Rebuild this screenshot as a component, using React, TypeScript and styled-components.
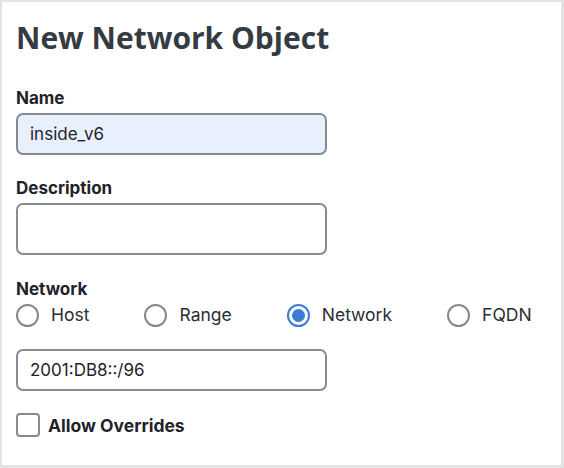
import { useState } from "react";
import styled, { createGlobalStyle } from "styled-components";

const GlobalStyle = createGlobalStyle`
  html, body {
    margin: 0;
    padding: 0;
    background: #ffffff;
  }
  body {
    font-family: Inter, "Liberation Sans", sans-serif;
    color: #1f2329;
  }
  * {
    box-sizing: border-box;
  }
`;

const Frame = styled.div`
  width: 564px;
  height: 468px;
  background: #ffffff;
  border-style: solid;
  border-color: #e3e3e3;
  border-width: 2px 3px 3px 2px;
  padding: 18px 14px 0 14px;
`;

const Title = styled.h1`
  margin: 0 0 32px;
  font-family: "Open Sans", Lato, sans-serif;
  font-weight: 700;
  font-size: 30px;
  line-height: 36px;
  color: #343b43;
  letter-spacing: 0;
`;

const Field = styled.div<{ gap?: number }>`
  display: flex;
  flex-direction: column;
  margin-bottom: ${(props) => props.gap ?? 21}px;
`;

const Label = styled.label`
  font-size: 17px;
  font-weight: 700;
  line-height: 20px;
  margin-bottom: 5px;
  color: #1f2329;
`;

const TextInput = styled.input<{ autofilled?: boolean; tall?: boolean }>`
  width: 311px;
  height: ${(props) => (props.tall ? 52 : 42)}px;
  border: 2px solid #868b92;
  border-radius: 7px;
  background: ${(props) => (props.autofilled ? "#e8f0fe" : "#ffffff")};
  padding: 0 12px;
  font-family: Inter, "Liberation Sans", sans-serif;
  font-size: 17px;
  color: #1f2329;
  outline: none;
`;

const RadioRow = styled.div`
  display: flex;
  align-items: center;
  gap: 55px;
  margin-top: -1px;
  margin-bottom: 22px;
`;

const RadioOption = styled.label`
  display: flex;
  align-items: center;
  gap: 12px;
  font-size: 17.5px;
  line-height: 24px;
  color: #2a2e33;
  cursor: pointer;
`;

const RadioCircle = styled.span<{ checked: boolean }>`
  width: 23px;
  height: 23px;
  border-radius: 50%;
  border: 2px solid ${(props) => (props.checked ? "#3a7bd5" : "#85898e")};
  display: flex;
  align-items: center;
  justify-content: center;
  &::after {
    content: "";
    width: 13px;
    height: 13px;
    border-radius: 50%;
    background: #3a7bd5;
    display: ${(props) => (props.checked ? "block" : "none")};
  }
`;

const CheckRow = styled.label`
  display: flex;
  align-items: center;
  gap: 8px;
  font-size: 17.5px;
  font-weight: 700;
  color: #1f2329;
  cursor: pointer;
`;

const CheckBox = styled.span<{ checked: boolean }>`
  width: 24px;
  height: 24px;
  border: 2px solid #868b92;
  border-radius: 4px;
  background: ${(props) => (props.checked ? "#3a7bd5" : "#ffffff")};
`;

const types = ["Host", "Range", "Network", "FQDN"];

const App = () => {
  const [type, setType] = useState("Network");
  const [overrides, setOverrides] = useState(false);
  return (
    <Frame>
      <GlobalStyle />
      <Title>New Network Object</Title>
      <Field gap={23}>
        <Label>Name</Label>
        <TextInput autofilled defaultValue="inside_v6" />
      </Field>
      <Field gap={24}>
        <Label>Description</Label>
        <TextInput tall defaultValue="" />
      </Field>
      <Field gap={0}>
        <Label>Network</Label>
      </Field>
      <RadioRow>
        {types.map((t) => (
          <RadioOption key={t} onClick={() => setType(t)}>
            <RadioCircle checked={type === t} />
            {t}
          </RadioOption>
        ))}
      </RadioRow>
      <Field gap={22}>
        <TextInput defaultValue="2001:DB8::/96" />
      </Field>
      <CheckRow onClick={() => setOverrides(!overrides)}>
        <CheckBox checked={overrides} />
        Allow Overrides
      </CheckRow>
    </Frame>
  );
};

export default App;
